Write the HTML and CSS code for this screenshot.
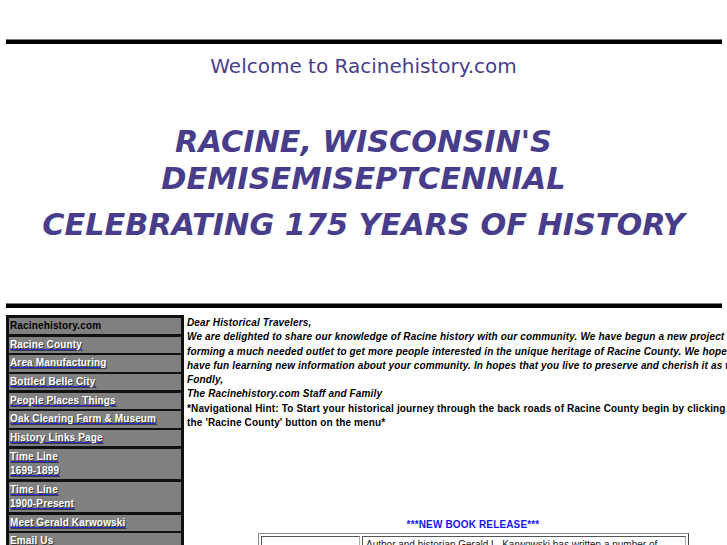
FILE: index.html
```html
<!DOCTYPE html>
<html>
<head>
<meta charset="utf-8">
<title>Racinehistory.com</title>
<link rel="stylesheet" href="styles.css">
</head>
<body>
<div class="rule rule-top"></div>
<div class="welcome">Welcome to Racinehistory.com</div>
<h1 class="title1">RACINE, WISCONSIN'S<br>DEMISEMISEPTCENNIAL</h1>
<h2 class="title2">CELEBRATING 175 YEARS OF HISTORY</h2>
<div class="rule rule-bottom"></div>
<div class="main">
  <div class="nav">
    <div class="nav-item current">Racinehistory.com</div>
    <div class="nav-item"><a href="#">Racine County</a></div>
    <div class="nav-item"><a href="#">Area Manufacturing</a></div>
    <div class="nav-item"><a href="#">Bottled Belle City</a></div>
    <div class="nav-item"><a href="#">People Places Things</a></div>
    <div class="nav-item"><a href="#">Oak Clearing Farm &amp; Museum</a></div>
    <div class="nav-item"><a href="#">History Links Page</a></div>
    <div class="nav-item"><a href="#">Time Line</a><br><a href="#">1699-1899</a></div>
    <div class="nav-item"><a href="#">Time Line</a><br><a href="#">1900-Present</a></div>
    <div class="nav-item"><a href="#">Meet Gerald Karwowski</a></div>
    <div class="nav-item"><a href="#">Email Us</a></div>
  </div>
  <div class="content">
    <div class="letter">
      Dear Historical Travelers,<br>
      We are delighted to share our knowledge of Racine history with our community. We have begun a new project by<br>
      forming a much needed outlet to get more people interested in the unique heritage of Racine County. We hope you<br>
      have fun learning new information about your community. In hopes that you live to preserve and cherish it as we do.<br>
      Fondly,<br>
      The Racinehistory.com Staff and Family
    </div>
    <div class="hint">
      *Navigational Hint: To Start your historical journey through the back roads of Racine County begin by clicking on<br>
      the 'Racine County' button on the menu*
    </div>
    <div class="release">***NEW BOOK RELEASE***</div>
    <div class="book">
      <div class="book-cell book-pic"></div>
      <div class="book-cell book-text">Author and historian Gerald L. Karwowski has written a number of books on the history of Racine County.</div>
    </div>
  </div>
</div>
</body>
</html>
```
FILE: styles.css
```css
html {
  overflow: hidden;
}
body {
  margin: 0;
  background: #ffffff;
  font-family: "Liberation Sans", Arial, sans-serif;
}
.rule {
  height: 4px;
  background: #000;
  border-top: 1px solid #7a7a7a;
  margin: 0 5px 0 6px;
}
.rule-top {
  margin-top: 39px;
}
.welcome {
  font-family: "DejaVu Sans", sans-serif;
  font-size: 20px;
  line-height: 23px;
  color: #483d8b;
  text-align: center;
  margin-top: 11px;
}
.title1,
.title2 {
  font-family: "DejaVu Sans", sans-serif;
  font-size: 30.3px;
  font-weight: bold;
  font-style: oblique;
  line-height: 37px;
  color: #483d8b;
  text-align: center;
  margin: 0;
}
.title1 {
  margin-top: 45px;
}
.title2 {
  margin-top: 9px;
}
.rule-bottom {
  margin-top: 60px;
}
.main {
  display: flex;
  align-items: flex-start;
  margin-top: 7px;
  margin-left: 6px;
}
.nav {
  width: 178px;
  box-sizing: border-box;
  background: #111;
  padding: 3px;
  display: flex;
  flex-direction: column;
  gap: 2.4px;
  flex-shrink: 0;
}
.nav-item {
  background: #808080;
  padding: 1px 1px;
  font-size: 10px;
  font-weight: bold;
  line-height: 14.3px;
  letter-spacing: 0.15px;
  color: #000;
  white-space: nowrap;
}
.nav-item a {
  color: #fff;
  text-decoration: underline;
  text-decoration-color: #2a2ad8;
  text-shadow: 1px 1px 0 #3a3a3a;
}
.content {
  width: 572px;
  flex-shrink: 0;
  margin-left: 3px;
  margin-top: 1px;
  font-size: 10px;
  line-height: 14.3px;
  font-weight: bold;
  color: #000;
  letter-spacing: 0.15px;
}
.letter {
  font-style: italic;
  white-space: nowrap;
}
.hint {
  white-space: nowrap;
}
.release {
  margin-top: 88px;
  text-align: center;
  color: #1515f0;
  line-height: 14px;
}
.book {
  width: 431px;
  box-sizing: border-box;
  margin: 1px 0 0 71px;
  border: 1px solid #888;
  border-right-color: #444;
  border-bottom-color: #444;
  padding: 2px;
  display: flex;
  gap: 2px;
}
.book-cell {
  border: 1px solid #555;
  border-right-color: #aaa;
  border-bottom-color: #aaa;
  min-height: 40px;
}
.book-pic {
  width: 99px;
  box-sizing: border-box;
}
.book-text {
  flex: 1;
  font-weight: normal;
  font-size: 10px;
  line-height: 12px;
  letter-spacing: 0;
  color: #222;
  padding: 2px 3px;
}
```
